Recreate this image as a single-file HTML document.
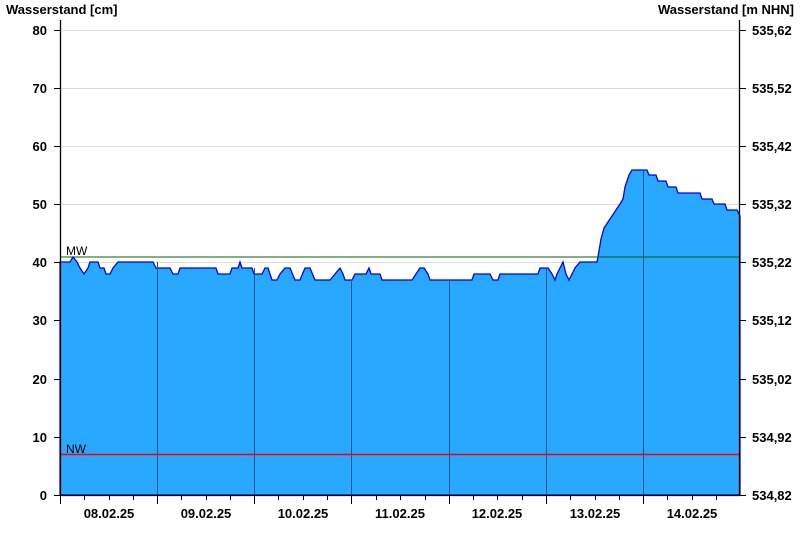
<!DOCTYPE html>
<html><head><meta charset="utf-8"><style>
html,body{margin:0;padding:0;background:#fff;width:800px;height:550px;overflow:hidden}
text{font-family:"Liberation Sans",Arial,sans-serif}
</style></head><body>
<svg width="800" height="550" xmlns="http://www.w3.org/2000/svg">
<g stroke="#dcdcdc" stroke-width="1">
<line x1="60" y1="30.5" x2="740" y2="30.5"/><line x1="60" y1="88.5" x2="740" y2="88.5"/>
<line x1="60" y1="146.5" x2="740" y2="146.5"/><line x1="60" y1="204.5" x2="740" y2="204.5"/>
<line x1="60" y1="262.5" x2="740" y2="262.5"/><line x1="60" y1="320.5" x2="740" y2="320.5"/>
<line x1="60" y1="379.5" x2="740" y2="379.5"/><line x1="60" y1="437.5" x2="740" y2="437.5"/>
</g>
<polygon fill="#29a8ff" stroke="#0000ee" stroke-width="1.3" points="60,495 60,262 70,262 73,257 77,262 80,268 84,274 88,268 90,262 98,262 100,268 104,268 106,274 110,274 113,268 118,262 153,262 156,268 170,268 173,274 178,274 180,268 216,268 218,274 230,274 232,268 238,268 240,262 242,268 252,268 254,274 262,274 265,268 268,268 272,280 277,280 280,274 285,268 290,268 295,280 300,280 305,268 310,268 315,280 330,280 335,274 340,268 343,274 345,280 352,280 355,274 366,274 369,268 371,274 380,274 382,280 412,280 416,274 420,268 424,268 428,274 430,280 472,280 474,274 490,274 493,280 498,280 500,274 538,274 540,268 548,268 552,274 555,280 557,274 560,268 563,262 566,274 569,280 572,274 575,268 580,262 597,262 599,251 601,239 604,228 608,222 612,216 616,210 620,204 623,199 625,187 627,181 629,175 632,170 647,170 649,175 656,175 658,181 666,181 668,187 676,187 678,193 700,193 702,199 712,199 714,204 725,204 727,210 737,210 740,216 740,495"/>
<g stroke="#1a5a8a" stroke-width="1">
<line x1="157.5" y1="262" x2="157.5" y2="495"/><line x1="254.5" y1="268" x2="254.5" y2="495"/>
<line x1="351.5" y1="280" x2="351.5" y2="495"/><line x1="449.5" y1="280" x2="449.5" y2="495"/>
<line x1="546.5" y1="268" x2="546.5" y2="495"/><line x1="643.5" y1="170" x2="643.5" y2="495"/>
</g>
<line x1="60" y1="257" x2="740" y2="257" stroke="#006400" stroke-width="1"/>
<line x1="60" y1="454.5" x2="740" y2="454.5" stroke="#ff0000" stroke-width="1.5"/>
<text x="66" y="255" font-size="12" fill="#000">MW</text>
<text x="66" y="453" font-size="12" fill="#000">NW</text>
<g stroke="#000" stroke-width="1.3">
<line x1="60.5" y1="20" x2="60.5" y2="496"/><line x1="739.5" y1="20" x2="739.5" y2="496"/>
<line x1="60" y1="495.5" x2="740" y2="495.5"/>
</g>
<g stroke="#000" stroke-width="1">
<line x1="54" y1="30.5" x2="60" y2="30.5"/><line x1="54" y1="88.5" x2="60" y2="88.5"/><line x1="54" y1="146.5" x2="60" y2="146.5"/><line x1="54" y1="204.5" x2="60" y2="204.5"/><line x1="54" y1="262.5" x2="60" y2="262.5"/><line x1="54" y1="320.5" x2="60" y2="320.5"/><line x1="54" y1="379.5" x2="60" y2="379.5"/><line x1="54" y1="437.5" x2="60" y2="437.5"/><line x1="54" y1="495.5" x2="60" y2="495.5"/>
<line x1="740" y1="30.5" x2="746" y2="30.5"/><line x1="740" y1="88.5" x2="746" y2="88.5"/><line x1="740" y1="146.5" x2="746" y2="146.5"/><line x1="740" y1="204.5" x2="746" y2="204.5"/><line x1="740" y1="262.5" x2="746" y2="262.5"/><line x1="740" y1="320.5" x2="746" y2="320.5"/><line x1="740" y1="379.5" x2="746" y2="379.5"/><line x1="740" y1="437.5" x2="746" y2="437.5"/><line x1="740" y1="495.5" x2="746" y2="495.5"/>
<line x1="60.5" y1="495" x2="60.5" y2="504"/><line x1="157.5" y1="495" x2="157.5" y2="504"/><line x1="254.5" y1="495" x2="254.5" y2="504"/><line x1="351.5" y1="495" x2="351.5" y2="504"/><line x1="449.5" y1="495" x2="449.5" y2="504"/><line x1="546.5" y1="495" x2="546.5" y2="504"/><line x1="643.5" y1="495" x2="643.5" y2="504"/>
<line x1="84.5" y1="495" x2="84.5" y2="500"/><line x1="109.5" y1="495" x2="109.5" y2="500"/><line x1="133.5" y1="495" x2="133.5" y2="500"/>
<line x1="181.5" y1="495" x2="181.5" y2="500"/><line x1="206.5" y1="495" x2="206.5" y2="500"/><line x1="230.5" y1="495" x2="230.5" y2="500"/>
<line x1="278.5" y1="495" x2="278.5" y2="500"/><line x1="303.5" y1="495" x2="303.5" y2="500"/><line x1="327.5" y1="495" x2="327.5" y2="500"/>
<line x1="376.5" y1="495" x2="376.5" y2="500"/><line x1="400.5" y1="495" x2="400.5" y2="500"/><line x1="425.5" y1="495" x2="425.5" y2="500"/>
<line x1="473.5" y1="495" x2="473.5" y2="500"/><line x1="497.5" y1="495" x2="497.5" y2="500"/><line x1="522.5" y1="495" x2="522.5" y2="500"/>
<line x1="570.5" y1="495" x2="570.5" y2="500"/><line x1="595.5" y1="495" x2="595.5" y2="500"/><line x1="619.5" y1="495" x2="619.5" y2="500"/>
<line x1="667.5" y1="495" x2="667.5" y2="500"/><line x1="692.5" y1="495" x2="692.5" y2="500"/><line x1="716.5" y1="495" x2="716.5" y2="500"/>
</g>
<g font-size="13" font-weight="bold" fill="#000">
<text x="6" y="14">Wasserstand [cm]</text>
<text x="794" y="14" text-anchor="end">Wasserstand [m NHN]</text>
<g text-anchor="end">
<text x="47" y="35">80</text><text x="47" y="93">70</text><text x="47" y="151">60</text><text x="47" y="209">50</text><text x="47" y="267">40</text><text x="47" y="325">30</text><text x="47" y="384">20</text><text x="47" y="442">10</text><text x="47" y="500">0</text>
</g>
<g>
<text x="752" y="35">535,62</text><text x="752" y="93">535,52</text><text x="752" y="151">535,42</text><text x="752" y="209">535,32</text><text x="752" y="267">535,22</text><text x="752" y="325">535,12</text><text x="752" y="384">535,02</text><text x="752" y="442">534,92</text><text x="752" y="500">534,82</text>
</g>
<g text-anchor="middle">
<text x="109" y="518">08.02.25</text><text x="206" y="518">09.02.25</text><text x="303" y="518">10.02.25</text><text x="400" y="518">11.02.25</text><text x="497" y="518">12.02.25</text><text x="595" y="518">13.02.25</text><text x="692" y="518">14.02.25</text>
</g>
</g>
</svg>
</body></html>
